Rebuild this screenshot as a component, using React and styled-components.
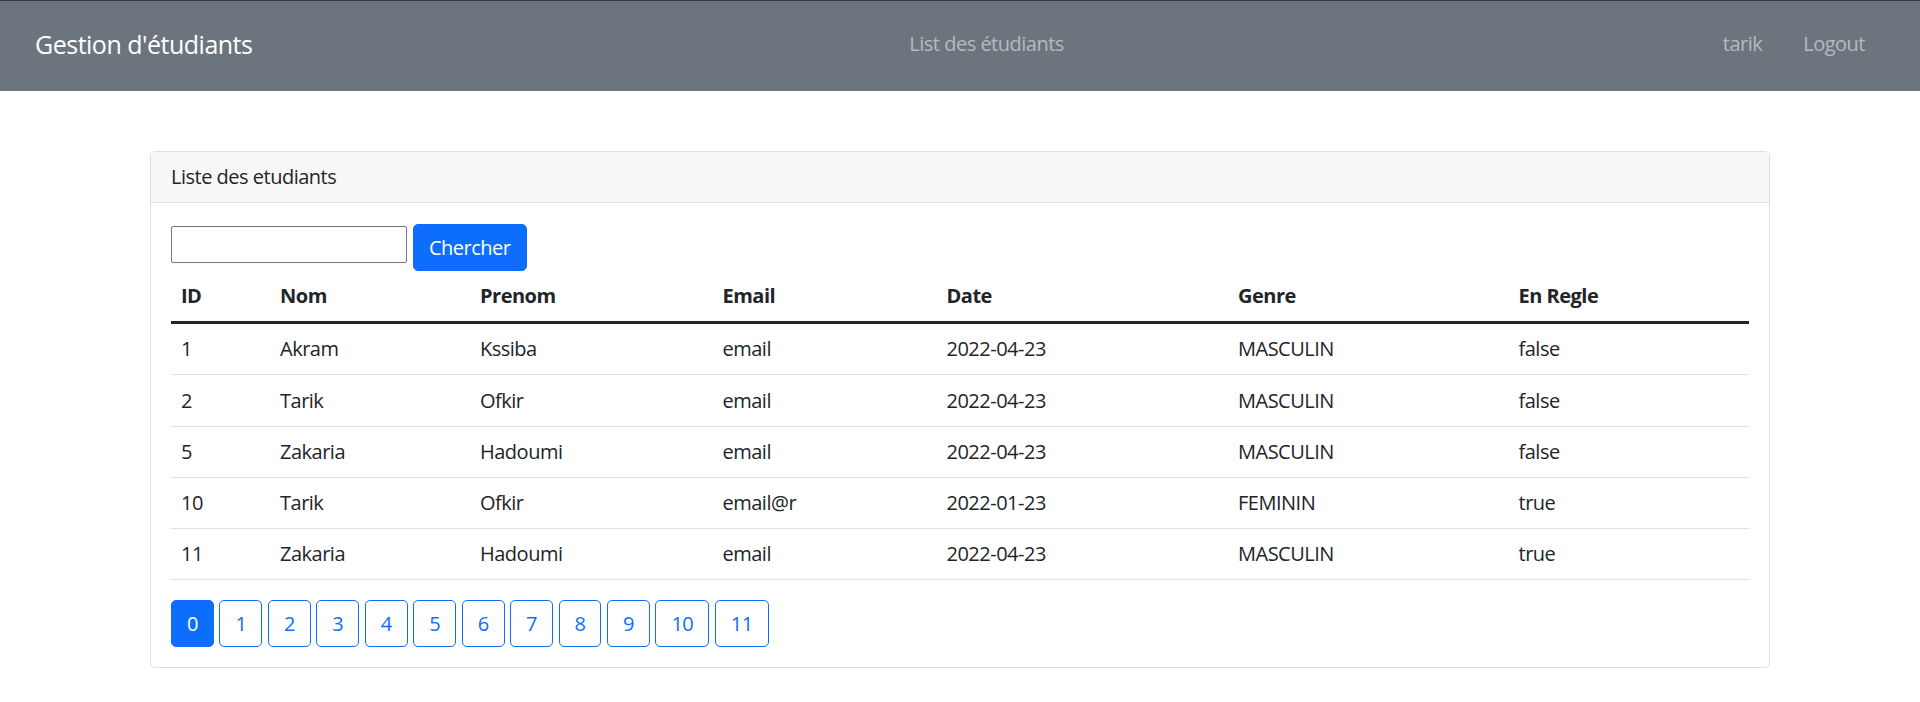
import React from "react";
import styled, { createGlobalStyle } from "styled-components";

const Global = createGlobalStyle`
  * { box-sizing: border-box; }
  html, body { margin: 0; padding: 0; background: #fff; }
  body {
    font-family: "Segoe UI", "Open Sans", "Noto Sans", sans-serif;
    font-size: 20px;
    line-height: 30px;
    color: #212529;
    letter-spacing: -0.025em;
  }
`;

const NavBar = styled.nav`
  height: 91px;
  background: #6c757d;
  border-top: 1px solid #363a46;
  display: flex;
  align-items: center;
  padding: 0 45px 0 35px;
`;

const Brand = styled.a`
  font-size: 25px;
  line-height: 37px;
  color: #fff;
  text-decoration: none;
  margin-right: 20px;
  margin-top: -3px;
`;

const CenterNav = styled.div`
  flex: 1;
  display: flex;
  justify-content: center;
  padding-right: 12px;
`;

const RightNav = styled.div`
  display: flex;
  align-items: center;
  gap: 21px;
`;

const NavLink = styled.a`
  color: #b6babe;
  text-decoration: none;
  padding: 0 10px;
  margin-top: -5px;
`;

const Container = styled.main`
  width: 1620px;
  margin: 60px auto 0;
`;

const Card = styled.section`
  border: 1px solid #dfdfdf;
  border-radius: 5px;
  overflow: hidden;
`;

const CardHeader = styled.header`
  background: #f7f7f7;
  border-bottom: 1px solid #dfdfdf;
  padding: 10px 20px;
  line-height: 30px;
`;

const CardBody = styled.div`
  padding: 20px;
`;

const SearchForm = styled.form`
  display: flex;
  align-items: flex-start;
  gap: 6px;
  padding-top: 1px;
`;

const SearchInput = styled.input`
  width: 236px;
  height: 37px;
  margin-top: 2px;
  border: 1px solid #767676;
  border-radius: 2px;
  font-family: inherit;
  font-size: 16px;
  padding: 1px 3px;
  background: #fff;
`;

const PrimaryButton = styled.button`
  height: 47px;
  padding: 0 15px;
  background: #0d6efd;
  color: #fff;
  border: 1px solid #0d6efd;
  border-radius: 5px;
  font-family: inherit;
  font-size: 20px;
  letter-spacing: inherit;
  cursor: pointer;
`;

const Table = styled.table`
  width: 100%;
  border-collapse: collapse;
  table-layout: fixed;
  margin-bottom: 20px;
`;

const Th = styled.th`
  text-align: left;
  font-weight: 700;
  padding: 10px 10px;
  line-height: 30px;
  border-bottom: 3px solid #212529;
`;

const Td = styled.td`
  padding: 10.25px 10px 10px;
  line-height: 30px;
  border-bottom: 1px solid #dee2e6;
`;

const Pagination = styled.div`
  display: flex;
  gap: 5.5px;
`;

const PageButton = styled.button`
  height: 47px;
  padding: 0 15px;
  border: 1px solid #0d6efd;
  border-radius: 5px;
  background: ${(p) => (p.$active ? "#0d6efd" : "#fff")};
  color: ${(p) => (p.$active ? "#fff" : "#0d6efd")};
  font-family: inherit;
  font-size: 20px;
  letter-spacing: inherit;
  cursor: pointer;
`;

const columns = [
  { label: "ID", width: 99 },
  { label: "Nom", width: 200 },
  { label: "Prenom", width: 242.5 },
  { label: "Email", width: 224 },
  { label: "Date", width: 291.5 },
  { label: "Genre", width: 280.5 },
  { label: "En Regle", width: 240.5 },
];

const rows = [
  ["1", "Akram", "Kssiba", "email", "2022-04-23", "MASCULIN", "false"],
  ["2", "Tarik", "Ofkir", "email", "2022-04-23", "MASCULIN", "false"],
  ["5", "Zakaria", "Hadoumi", "email", "2022-04-23", "MASCULIN", "false"],
  ["10", "Tarik", "Ofkir", "email@r", "2022-01-23", "FEMININ", "true"],
  ["11", "Zakaria", "Hadoumi", "email", "2022-04-23", "MASCULIN", "true"],
];

const pages = Array.from({ length: 12 }, (_, i) => i);

export default function App() {
  return (
    <>
      <Global />
      <NavBar>
        <Brand href="#">Gestion d'étudiants</Brand>
        <CenterNav>
          <NavLink href="#">List des étudiants</NavLink>
        </CenterNav>
        <RightNav>
          <NavLink href="#">tarik</NavLink>
          <NavLink href="#">Logout</NavLink>
        </RightNav>
      </NavBar>
      <Container>
        <Card>
          <CardHeader>Liste des etudiants</CardHeader>
          <CardBody>
            <SearchForm onSubmit={(e) => e.preventDefault()}>
              <SearchInput type="text" />
              <PrimaryButton type="submit">Chercher</PrimaryButton>
            </SearchForm>
            <Table>
              <colgroup>
                {columns.map((c) => (
                  <col key={c.label} style={{ width: c.width }} />
                ))}
              </colgroup>
              <thead>
                <tr>
                  {columns.map((c) => (
                    <Th key={c.label}>{c.label}</Th>
                  ))}
                </tr>
              </thead>
              <tbody>
                {rows.map((r) => (
                  <tr key={r[0]}>
                    {r.map((v, i) => (
                      <Td key={i}>{v}</Td>
                    ))}
                  </tr>
                ))}
              </tbody>
            </Table>
            <Pagination>
              {pages.map((p) => (
                <PageButton key={p} $active={p === 0}>
                  {p}
                </PageButton>
              ))}
            </Pagination>
          </CardBody>
        </Card>
      </Container>
    </>
  );
}
